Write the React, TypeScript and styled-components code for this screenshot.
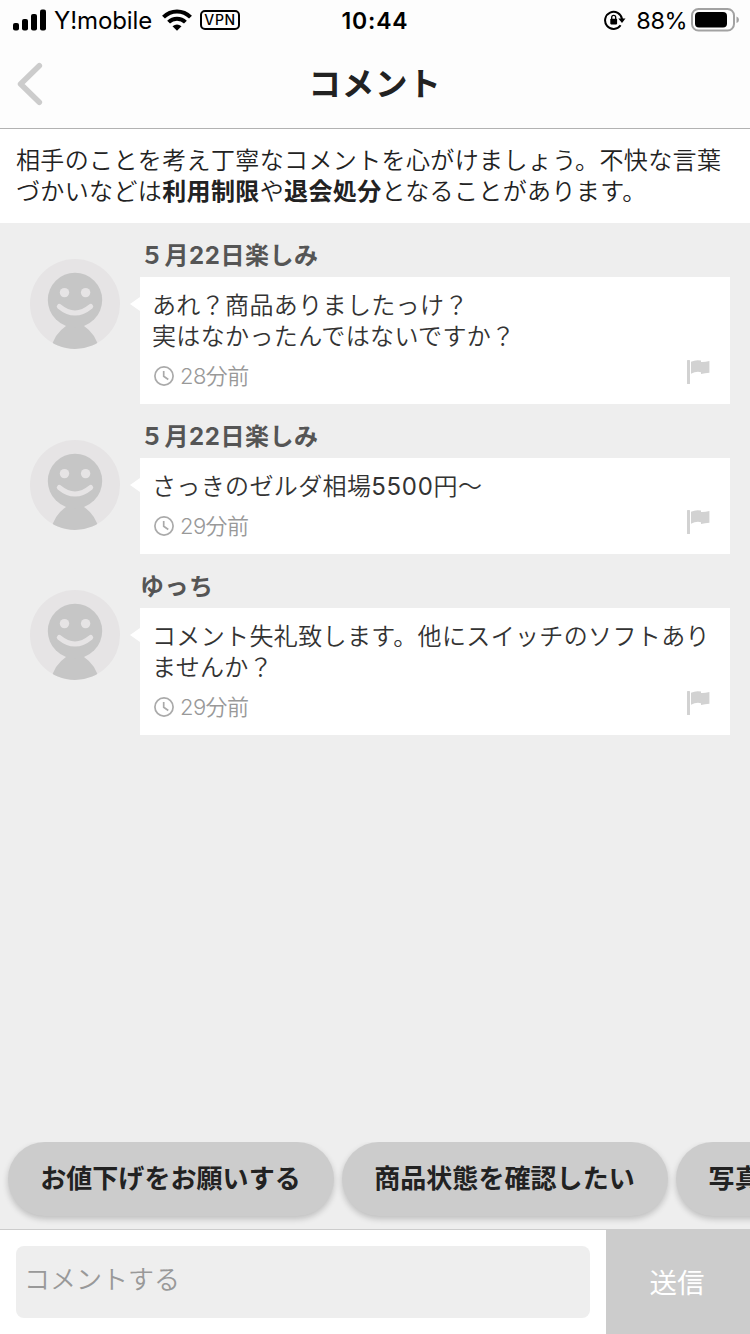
import React from "react";
import styled, { createGlobalStyle } from "styled-components";

const GlobalStyle = createGlobalStyle`
  * { box-sizing: border-box; }
  body { margin: 0; background: #eee; }
  button, input { font: inherit; border: 0; }
`;

const Screen = styled.div`
  display: flex;
  flex-direction: column;
  width: 750px;
  height: 1334px;
  overflow: hidden;
  background: #eee;
  color: #222;
  font-family: Inter, "Noto Sans CJK JP", sans-serif;
`;

const StatusBar = styled.div`
  display: grid;
  grid-template-columns: 1fr auto 1fr;
  align-items: center;
  height: 40px;
  padding: 0 11px 0 13px;
  background: #fdfdfd;
  color: #000;
  font-size: 24px;
  line-height: 40px;
`;

const StatusGroup = styled.div<{ $end?: boolean }>`
  display: flex;
  align-items: center;
  justify-content: ${(p) => (p.$end ? "flex-end" : "flex-start")};
`;

const Carrier = styled.span`
  margin: 0 10px 0 8px;
  padding-top: 2px;
  line-height: 38px;
  letter-spacing: -0.1px;
`;

const Vpn = styled.span`
  width: 40px;
  height: 20px;
  margin-left: 8px;
  border: 2px solid #000;
  border-radius: 5px;
  font-size: 14px;
  font-weight: 500;
  line-height: 16px;
  letter-spacing: 0.7px;
  text-align: center;
`;

const Clock = styled.span`
  padding: 2px 2px 0 0;
  font-weight: 600;
  font-size: 23px;
  line-height: 38px;
  letter-spacing: 0.8px;
`;

const Percent = styled.span`
  margin: 0 4px 0 10px;
  padding-top: 2px;
  font-size: 23.5px;
  line-height: 38px;
  letter-spacing: -0.5px;
`;

const NavBar = styled.header`
  display: grid;
  grid-template-columns: 60px 1fr 60px;
  align-items: center;
  height: 89px;
  background: #fdfdfd;
  border-bottom: 1px solid #b2b2b2;
`;

const BackButton = styled.button`
  display: flex;
  padding: 0 0 0 16px;
  background: none;
`;

const Title = styled.h1`
  margin: 0;
  padding-top: 2px;
  font-size: 32.5px;
  font-weight: 700;
  line-height: 86px;
  letter-spacing: 0.7px;
  text-align: center;
`;

const Notice = styled.p`
  height: 94px;
  margin: 0;
  padding: 16px 12px 16px 16px;
  background: #fff;
  font-size: 24px;
  font-weight: 350;
  line-height: 31px;
  letter-spacing: 0.37px;

  strong { font-weight: 700; }
`;

const CommentList = styled.main`
  flex: 1;
`;

const Comment = styled.article`
  display: flex;
  padding: 0 20px 0 30px;
`;

const Avatar = styled.svg`
  flex: none;
  width: 90px;
  height: 90px;
  margin-top: 36px;
`;

const CommentBody = styled.div`
  flex: 1;
  margin-left: 20px;
`;

const UserName = styled.h2`
  height: 54px;
  margin: 0;
  padding-top: 11px;
  color: #555;
  font-size: 24px;
  font-weight: 700;
  line-height: 43px;
  letter-spacing: 0.55px;
`;

const Bubble = styled.div`
  position: relative;
  padding: 13px 12px 12px;
  background: #fff;

  &::before {
    content: "";
    position: absolute;
    left: -10px;
    top: 20px;
    border: 7px solid transparent;
    border-right: 10px solid #fff;
    border-left: 0;
  }
`;

const CommentText = styled.p`
  margin: 0;
  color: #333;
  font-size: 24px;
  font-weight: 350;
  line-height: 31px;
  letter-spacing: 0.36px;
  white-space: pre-line;
`;

const Digits = styled.span`
  font-weight: 400;
  letter-spacing: 0.7px;
`;

const Meta = styled.div`
  display: flex;
  align-items: center;
  justify-content: space-between;
  height: 31px;
  margin-top: 9px;
  padding: 0 8px 0 2px;
`;

const Time = styled.span`
  display: flex;
  align-items: center;
  gap: 6px;
  color: #999;
  font-size: 22px;
  font-weight: 350;
  line-height: 31px;
  letter-spacing: -0.6px;
`;

const ClockIcon = styled.svg`
  margin-top: -2px;
`;

const FlagIcon = styled.svg`
  margin-top: -10px;
`;

const Suggestions = styled.div`
  display: flex;
  gap: 8px;
  height: 88px;
  padding: 0 8px;
  overflow: hidden;
  border-bottom: 1px solid #ccc;
`;

const Chip = styled.button`
  flex: none;
  width: 326px;
  height: 74px;
  padding: 0 1px 5px 0;
  border-radius: 37px;
  background: #ccc;
  box-shadow: 0 3px 6px rgba(0, 0, 0, 0.2);
  color: #222;
  font-size: 26px;
  font-weight: 700;
  letter-spacing: 0.06px;
  white-space: nowrap;
`;

const Composer = styled.form`
  display: flex;
  height: 104px;
  background: #fff;
`;

const CommentInput = styled.input`
  width: 574px;
  height: 72px;
  margin: 16px;
  padding: 0 8px 6px;
  border-radius: 8px;
  background: #eee;
  font-size: 26px;
  font-weight: 350;

  &::placeholder { color: #999; opacity: 1; }
`;

const SendButton = styled.button`
  width: 144px;
  padding: 0 2px 2px 0;
  background: #ccc;
  color: #fff;
  font-size: 27.5px;
`;

const comments = [
  { user: "５月22日楽しみ", text: "あれ？商品ありましたっけ？\n実はなかったんではないですか？", time: "28分前" },
  { user: "５月22日楽しみ", text: "さっきのゼルダ相場5500円〜", time: "29分前" },
  { user: "ゆっち", text: "コメント失礼致します。他にスイッチのソフトありませんか？", time: "29分前" },
];

const suggestions = ["お値下げをお願いする", "商品状態を確認したい", "写真を追加してほしい"];

// Latin digits are set one step heavier than the kana and kanji around them.
function withDigits(text: string) {
  return text
    .split(/([0-9]+)/)
    .map((part, i) => (i % 2 ? <Digits key={i}>{part}</Digits> : part));
}

function DefaultAvatar() {
  return (
    <Avatar viewBox="0 0 90 90">
      <defs>
        <clipPath id="avatar-disc">
          <circle cx="45" cy="45" r="45" />
        </clipPath>
      </defs>
      <g clipPath="url(#avatar-disc)">
        <rect width="90" height="90" fill="#e6e4e5" />
        <path d="M21 90Q24 75 36 67L32 62H58L54 67Q66 75 69 90Z" fill="#c6c6c6" />
        <circle cx="45" cy="41" r="27.2" fill="#c6c6c6" />
      </g>
      <circle cx="34.5" cy="33.6" r="4.7" fill="#e6e4e5" />
      <circle cx="55.6" cy="33.6" r="4.7" fill="#e6e4e5" />
      <path d="M29.3 47.5Q45 60.5 60.7 47.5" fill="none" stroke="#e6e4e5" strokeWidth="5" strokeLinecap="round" />
    </Avatar>
  );
}

export default function App() {
  return (
    <Screen>
      <GlobalStyle />
      <StatusBar>
        <StatusGroup>
          <svg width="33" height="22" viewBox="0 0 33 22">
            <rect x="0" y="14" width="6" height="7.5" rx="2" />
            <rect x="9" y="10" width="6" height="11.5" rx="2" />
            <rect x="18" y="5" width="6" height="16.5" rx="2" />
            <rect x="27" y="0.5" width="6" height="21" rx="2" />
          </svg>
          <Carrier>Y!mobile</Carrier>
          <svg width="30" height="22" viewBox="0 0 30 22" fill="none" stroke="#000" strokeWidth="4">
            <path d="M1.5 8.2Q7.2 2.4 15 2.4T28.5 8.2" />
            <path d="M6.6 13.2Q10 9.8 15 9.8T23.4 13.2" />
            <path d="M10.5 17.2Q15 13.6 19.5 17.2L15 21.8Z" fill="#000" stroke="none" />
          </svg>
          <Vpn>VPN</Vpn>
        </StatusGroup>
        <Clock>10:44</Clock>
        <StatusGroup $end>
          <svg width="22" height="20" viewBox="0 0 22 20">
            <path d="M16.6 15.2A8.5 8.5 0 1 1 18 9.2" fill="none" stroke="#000" strokeWidth="2" />
            <path d="M14.3 8.6H21.5L18 13Z" />
            <rect x="6.3" y="8.8" width="6.8" height="5.6" rx="0.8" />
            <path d="M7.7 9V7.4a2 2 0 0 1 4 0V9" fill="none" stroke="#000" strokeWidth="1.3" />
          </svg>
          <Percent>88%</Percent>
          <svg width="48" height="24" viewBox="0 0 48 24">
            <rect x="1" y="1" width="42" height="21.5" rx="6.5" fill="none" stroke="#a2a2a2" strokeWidth="2" />
            <rect x="4" y="4" width="32" height="15.5" rx="4" />
            <path d="M45.5 8.5Q48 9.2 48 11.8T45.5 15Z" fill="#a2a2a2" />
          </svg>
        </StatusGroup>
      </StatusBar>
      <NavBar>
        <BackButton aria-label="戻る">
          <svg width="28" height="44" viewBox="0 0 28 44" fill="none" stroke="#ccc" strokeWidth="5.6" strokeLinecap="round" strokeLinejoin="round">
            <path d="M23.3 3.7L4.6 22L23.3 40.3" />
          </svg>
        </BackButton>
        <Title>コメント</Title>
      </NavBar>
      <Notice>
        相手のことを考え丁寧なコメントを心がけましょう。不快な言葉づかいなどは<strong>利用制限</strong>や<strong>退会処分</strong>となることがあります。
      </Notice>
      <CommentList>
        {comments.map((c, i) => (
          <Comment key={i}>
            <DefaultAvatar />
            <CommentBody>
              <UserName>{c.user}</UserName>
              <Bubble>
                <CommentText>{withDigits(c.text)}</CommentText>
                <Meta>
                  <Time>
                    <ClockIcon width="20" height="20" viewBox="0 0 20 20" fill="none" stroke="#aaa" strokeWidth="1.7">
                      <circle cx="10" cy="10" r="9.1" />
                      <path d="M9.7 5V10.3L14.3 13.5" />
                    </ClockIcon>
                    {c.time}
                  </Time>
                  <FlagIcon width="23" height="24" viewBox="0 0 23 24" fill="#d2d2d2">
                    <rect x="0" y="0" width="3" height="24" rx="0.6" />
                    <path d="M4 1.8Q9 -0.6 14 0.6V2Q18 2.2 22.4 1V12.7Q18 13 14 14V12.2Q9 11 4 13.8Z" />
                  </FlagIcon>
                </Meta>
              </Bubble>
            </CommentBody>
          </Comment>
        ))}
      </CommentList>
      <Suggestions>
        {suggestions.map((s) => (
          <Chip key={s}>{s}</Chip>
        ))}
      </Suggestions>
      <Composer>
        <CommentInput placeholder="コメントする" />
        <SendButton type="button">送信</SendButton>
      </Composer>
    </Screen>
  );
}
